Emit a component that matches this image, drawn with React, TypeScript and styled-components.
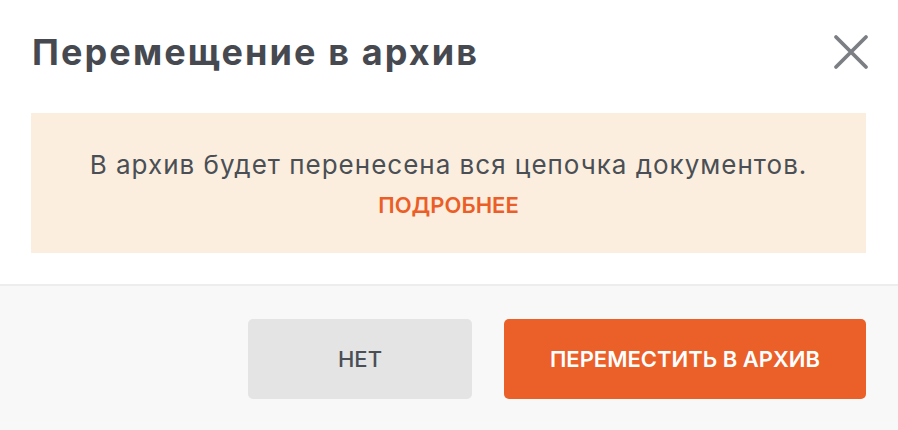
import * as React from "react"
import styled, { createGlobalStyle } from "styled-components"

const GlobalStyle = createGlobalStyle`
  html, body {
    margin: 0;
    padding: 0;
    background: #ffffff;
  }
  body {
    font-family: Inter, "Noto Sans", "Liberation Sans", sans-serif;
  }
`

const Dialog = styled.div`
  width: 898px;
  height: 430px;
  display: flex;
  flex-direction: column;
  background: #ffffff;
  overflow: hidden;
`

const Header = styled.div`
  display: flex;
  align-items: center;
  justify-content: space-between;
  padding: 32px 27px 0 32px;
  height: 40px;
`

const Title = styled.h1`
  margin: 0;
  font-size: 36px;
  line-height: 40px;
  font-weight: 700;
  color: #464a50;
  letter-spacing: 2.1px;
  white-space: nowrap;
`

const CloseButton = styled.button`
  border: 0;
  background: transparent;
  padding: 0;
  width: 40px;
  height: 40px;
  display: flex;
  align-items: center;
  justify-content: center;
  cursor: pointer;
`

const Body = styled.div`
  padding: 41px 32px 31px 31px;
`

const Notice = styled.div`
  background: #fbeede;
  padding: 32px 20px 32px;
  display: flex;
  flex-direction: column;
  align-items: center;
`

const NoticeText = styled.p`
  margin: 0;
  font-size: 26px;
  line-height: 40px;
  letter-spacing: 1px;
  color: #4a4f55;
  white-space: nowrap;
`

const MoreLink = styled.a`
  margin-top: 4px;
  font-size: 22px;
  line-height: 32px;
  font-weight: 600;
  color: #eb5e28;
  text-decoration: none;
  cursor: pointer;
`

const Footer = styled.div`
  flex: 1;
  background: #f8f8f8;
  border-top: 2px solid #ededed;
  display: flex;
  justify-content: flex-end;
  gap: 32px;
  padding: 33px 32px 0;
`

const Button = styled.button<{ $primary?: boolean }>`
  height: 80px;
  width: ${(p) => (p.$primary ? "362px" : "224px")};
  border: 0;
  border-radius: 5px;
  font-family: inherit;
  font-size: 22px;
  font-weight: ${(p) => (p.$primary ? 600 : 500)};
  background: ${(p) => (p.$primary ? "#eb5f29" : "#e4e4e4")};
  color: ${(p) => (p.$primary ? "#ffffff" : "#4a4f55")};
  cursor: pointer;
`

const CloseIcon = () => (
  <svg width="36" height="36" viewBox="0 0 36 36" fill="none">
    <path
      d="M3 3L33 33M33 3L3 33"
      stroke="#7b7e83"
      strokeWidth="3.8"
      strokeLinecap="round"
    />
  </svg>
)

export default function App() {
  return (
    <>
      <GlobalStyle />
      <Dialog>
        <Header>
          <Title>Перемещение в архив</Title>
          <CloseButton aria-label="Закрыть">
            <CloseIcon />
          </CloseButton>
        </Header>
        <Body>
          <Notice>
            <NoticeText>В архив будет перенесена вся цепочка документов.</NoticeText>
            <MoreLink>ПОДРОБНЕЕ</MoreLink>
          </Notice>
        </Body>
        <Footer>
          <Button>НЕТ</Button>
          <Button $primary>ПЕРЕМЕСТИТЬ В АРХИВ</Button>
        </Footer>
      </Dialog>
    </>
  )
}
